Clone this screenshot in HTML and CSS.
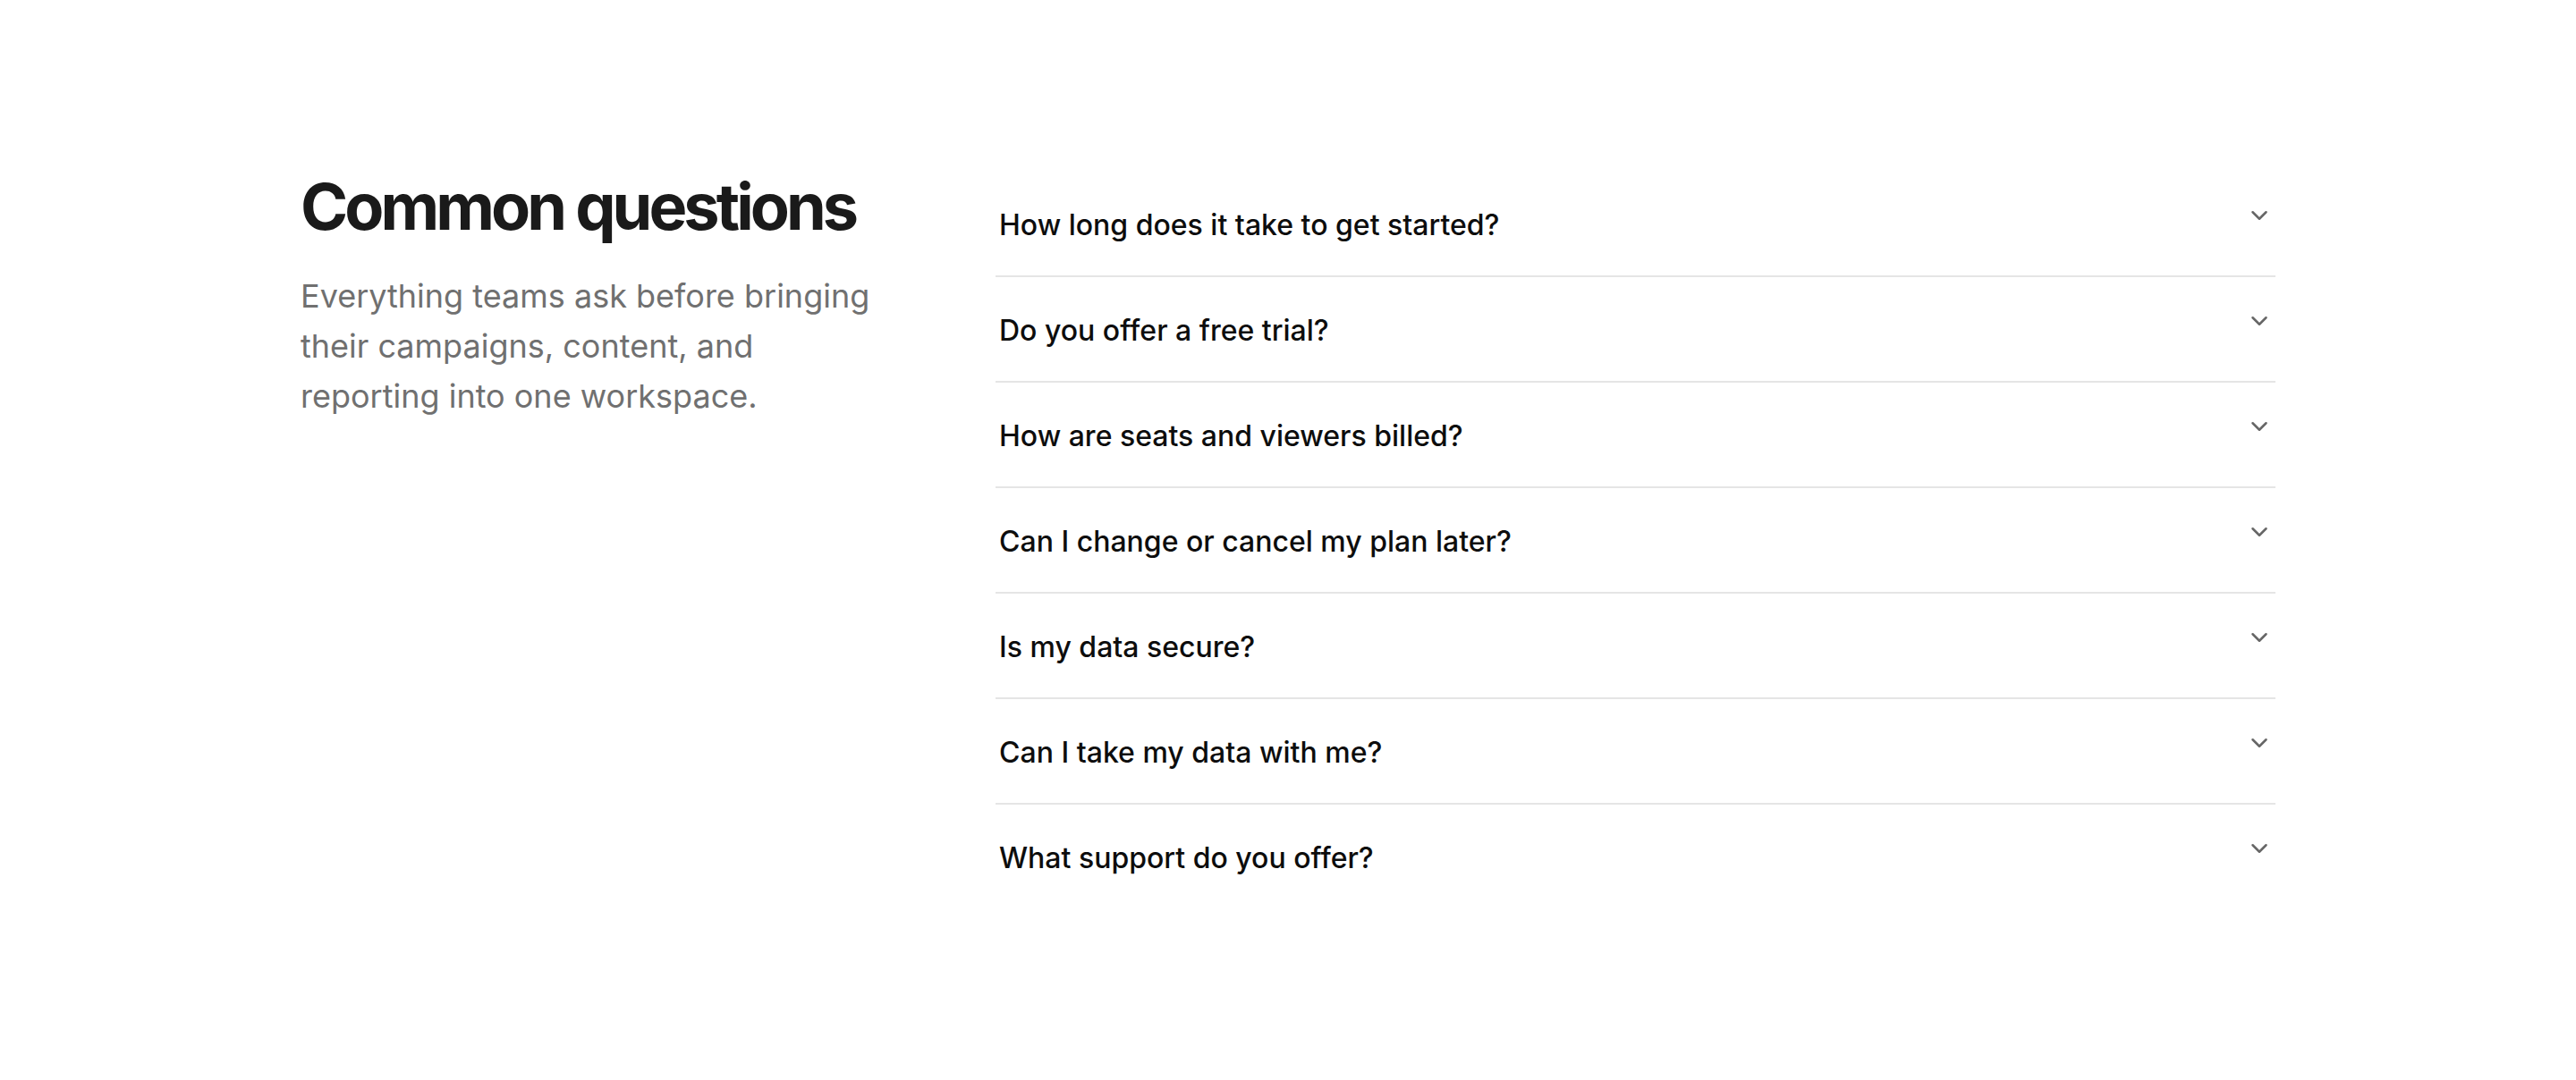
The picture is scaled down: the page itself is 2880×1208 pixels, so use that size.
FILE: index.html
```html
<!DOCTYPE html>
<html lang="en">
<head>
<meta charset="utf-8">
<title>Common questions</title>
<link rel="stylesheet" href="styles.css">
</head>
<body>
<section class="faq">
  <div class="faq-intro">
    <h2 class="faq-title">Common questions</h2>
    <p class="faq-lead">Everything teams ask before bringing their campaigns, content, and reporting into one workspace.</p>
  </div>
  <div class="faq-list">
    <div class="faq-item">
      <span class="faq-q">How long does it take to get started?</span>
      <svg class="chev" viewBox="0 0 24 24" fill="none" stroke="currentColor" stroke-width="2" stroke-linecap="round" stroke-linejoin="round"><path d="m6 9 6 6 6-6"/></svg>
    </div>
    <div class="faq-item">
      <span class="faq-q">Do you offer a free trial?</span>
      <svg class="chev" viewBox="0 0 24 24" fill="none" stroke="currentColor" stroke-width="2" stroke-linecap="round" stroke-linejoin="round"><path d="m6 9 6 6 6-6"/></svg>
    </div>
    <div class="faq-item">
      <span class="faq-q">How are seats and viewers billed?</span>
      <svg class="chev" viewBox="0 0 24 24" fill="none" stroke="currentColor" stroke-width="2" stroke-linecap="round" stroke-linejoin="round"><path d="m6 9 6 6 6-6"/></svg>
    </div>
    <div class="faq-item">
      <span class="faq-q">Can I change or cancel my plan later?</span>
      <svg class="chev" viewBox="0 0 24 24" fill="none" stroke="currentColor" stroke-width="2" stroke-linecap="round" stroke-linejoin="round"><path d="m6 9 6 6 6-6"/></svg>
    </div>
    <div class="faq-item">
      <span class="faq-q">Is my data secure?</span>
      <svg class="chev" viewBox="0 0 24 24" fill="none" stroke="currentColor" stroke-width="2" stroke-linecap="round" stroke-linejoin="round"><path d="m6 9 6 6 6-6"/></svg>
    </div>
    <div class="faq-item">
      <span class="faq-q">Can I take my data with me?</span>
      <svg class="chev" viewBox="0 0 24 24" fill="none" stroke="currentColor" stroke-width="2" stroke-linecap="round" stroke-linejoin="round"><path d="m6 9 6 6 6-6"/></svg>
    </div>
    <div class="faq-item">
      <span class="faq-q">What support do you offer?</span>
      <svg class="chev" viewBox="0 0 24 24" fill="none" stroke="currentColor" stroke-width="2" stroke-linecap="round" stroke-linejoin="round"><path d="m6 9 6 6 6-6"/></svg>
    </div>
  </div>
</section>
</body>
</html>
```

FILE: styles.css
```css
html, body {
  margin: 0;
  padding: 0;
  background: #ffffff;
}

body {
  font-family: Inter, "Noto Sans", "Liberation Sans", sans-serif;
  color: #111111;
}

.faq {
  display: grid;
  grid-template-columns: 660px 1fr;
  column-gap: 117px;
  padding: 190px 336px 0 336px;
}

.faq-title {
  margin: 0;
  font-size: 72px;
  line-height: 81px;
  font-weight: 700;
  letter-spacing: -0.055em;
  white-space: nowrap;
  color: #1a1a1a;
}

.faq-lead {
  margin: 32px 0 0 0;
  max-width: 652px;
  font-size: 36px;
  line-height: 56px;
  font-weight: 400;
  color: #707070;
}

.faq-list {
  display: flex;
  flex-direction: column;
  margin-top: 2px;
}

.faq-item {
  display: flex;
  justify-content: space-between;
  align-items: flex-start;
  padding: 38px 3px 34px 4px;
  border-bottom: 2px solid #e5e5e5;
}

.faq-item:last-child {
  border-bottom: none;
}

.faq-q {
  font-size: 32px;
  line-height: 44px;
  font-weight: 500;
  color: #0d0d0d;
}

.chev {
  width: 30px;
  height: 30px;
  flex: none;
  margin-top: -4px;
  color: #666666;
}
```
